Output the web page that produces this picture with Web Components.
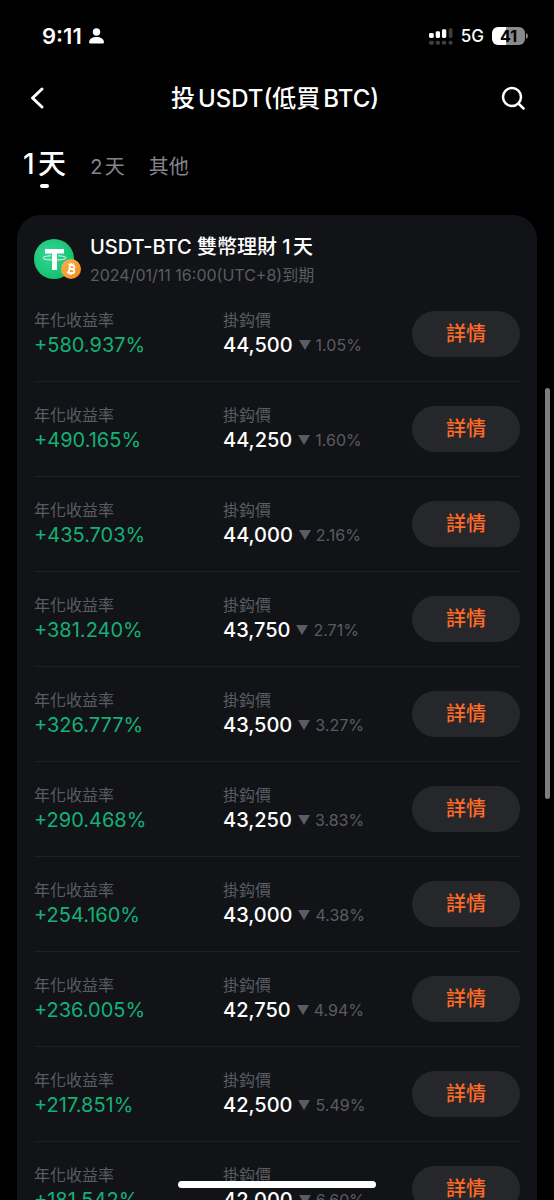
<!DOCTYPE html>
<html lang="zh-Hant">
<head>
<meta charset="utf-8">
<meta name="viewport" content="width=device-width, initial-scale=1">
<title>投USDT(低買BTC)</title>
<style>
  html, body { margin: 0; height: 100%; background: #000; }
  body {
    font-family: Inter, "Noto Sans CJK TC", sans-serif;
    color: #fff;
    text-autospace: normal;
    overflow: hidden;
  }
</style>
</head>
<body>
<dual-app>
  <status-bar slot="status" time="9:11" network="5G" battery="41"></status-bar>
  <nav-header slot="header">投USDT(低買BTC)</nav-header>
  <day-tabs slot="tabs"></day-tabs>
  <product-card>
    <product-head slot="head">
      USDT-BTC 雙幣理財 1天
      <span slot="expiry">2024/01/11 16:00(UTC+8)到期</span>
    </product-head>
    <yield-row apr="+580.937%" price="44,500" drop="1.05%"></yield-row>
    <yield-row apr="+490.165%" price="44,250" drop="1.60%"></yield-row>
    <yield-row apr="+435.703%" price="44,000" drop="2.16%"></yield-row>
    <yield-row apr="+381.240%" price="43,750" drop="2.71%"></yield-row>
    <yield-row apr="+326.777%" price="43,500" drop="3.27%"></yield-row>
    <yield-row apr="+290.468%" price="43,250" drop="3.83%"></yield-row>
    <yield-row apr="+254.160%" price="43,000" drop="4.38%"></yield-row>
    <yield-row apr="+236.005%" price="42,750" drop="4.94%"></yield-row>
    <yield-row apr="+217.851%" price="42,500" drop="5.49%"></yield-row>
    <yield-row apr="+181.542%" price="42,000" drop="6.60%"></yield-row>
  </product-card>
</dual-app>

<script>
const define = (name, render) => customElements.define(name, class extends HTMLElement {
  constructor() {
    super();
    this.attachShadow({ mode: 'open' });
  }
  connectedCallback() {
    this.shadowRoot.innerHTML = render(this);
  }
});

define('dual-app', () => `
  <style>
    :host { display: flex; flex-direction: column; height: 100vh; position: relative; }
    main { flex: 1; min-height: 0; overflow: hidden; padding: 0 17px; }
    .thumb { position: absolute; right: 4px; top: 388px; width: 5px; height: 411px; border-radius: 3px; background: #7d7d80; }
    .home { position: absolute; left: 50%; bottom: 12px; width: 198px; height: 7px; margin-left: -99px; border-radius: 4px; background: #fff; }
  </style>
  <slot name="status"></slot>
  <slot name="header"></slot>
  <slot name="tabs"></slot>
  <main><slot></slot></main>
  <div class="thumb"></div>
  <div class="home"></div>`);

define('status-bar', el => `
  <style>
    :host { display: flex; align-items: center; justify-content: space-between; height: 72px; padding: 0 26px 0 42px; }
    div { display: flex; align-items: center; }
    .time { gap: 7px; font-size: 22px; font-weight: 600; }
    .net { gap: 8px; font-size: 17px; font-weight: 500; }
    .level { box-sizing: border-box; width: 33px; height: 18px; border-radius: 6px; background: linear-gradient(90deg, #fff 42%, #8a8a8a 42%); color: #000; font-size: 16px; font-weight: 700; justify-content: center; }
    .cell { gap: 1px; }
    svg { display: block; }
  </style>
  <div class="time"><span>${el.getAttribute('time')}</span>
    <svg width="15" height="16" viewBox="0 0 15 16" fill="#fff"><circle cx="7.500" cy="4" r="3.700"/><path d="M1.200 15.500Q0 15.500 0 14C.3 11 3.300 9 7.500 9s7.200 2 7.500 5Q15 15.500 13.800 15.500Z"/></svg>
  </div>
  <div class="net">
    <svg width="24" height="18" viewBox="0 0 25 18">
      <g fill="#fff"><rect x="0" y="6" width="5" height="5" rx="1.500"/><rect x="7" y="4" width="4.500" height="7" rx="1.500"/><rect x="13.500" y="2" width="4.500" height="9" rx="1.500"/></g>
      <g fill="#3c3c3c"><rect x="20.500" y="1" width="4" height="10" rx="1.500"/><rect x="0" y="14" width="5" height="4" rx="1.500"/><rect x="7" y="14" width="4.500" height="4" rx="1.500"/><rect x="13.500" y="14" width="4.500" height="4" rx="1.500"/><rect x="20.500" y="14" width="4" height="4" rx="1.500"/></g>
    </svg>
    <span>${el.getAttribute('network')}</span>
    <div class="cell"><div class="level">${el.getAttribute('battery')}</div>
      <svg width="2" height="6" viewBox="0 0 2 6"><path d="M0 0Q2 1 2 3T0 6Z" fill="#8a8a8a"/></svg></div>
  </div>`);

define('nav-header', () => `
  <style>
    :host { display: flex; align-items: center; justify-content: space-between; height: 52px; padding: 0 29px 0 25px; }
    button { display: grid; place-items: center; width: 24px; height: 32px; padding: 0; border: 0; background: none; color: #fff; }
    h1 { margin: 0; font-size: 24px; font-weight: 500; line-height: 32px; padding-top: 2px; white-space: nowrap; }
    svg { fill: none; stroke: #fff; stroke-width: 2.500; stroke-linecap: round; stroke-linejoin: round; }
  </style>
  <button type="button" aria-label="返回"><svg width="24" height="24" viewBox="0 0 24 24"><path stroke-width="3" d="M17 3L7.500 12L17 21"/></svg></button>
  <h1><slot></slot></h1>
  <button type="button" aria-label="搜尋"><svg width="24" height="24" viewBox="0 0 24 24"><circle cx="11" cy="11" r="9"/><path d="M17.500 17.500L22.500 22.500"/></svg></button>`);

define('day-tabs', () => `
  <style>
    :host { display: block; height: 91px; }
    nav { display: flex; align-items: baseline; gap: 24px; padding: 20px 23px 0; }
    button { display: block; padding: 0; border: 0; background: none; font: 400 20px/40px Inter, "Noto Sans CJK TC", sans-serif; color: #85868d; text-autospace: normal; }
    button[aria-current] { font-size: 28px; font-weight: 500; color: #fff; }
    button[aria-current]::after { content: ""; display: block; width: 9px; height: 4px; margin: 0 auto; border-radius: 2px; background: #fff; }
  </style>
  <nav><button type="button" aria-current="true">1天</button><button type="button">2天</button><button type="button">其他</button></nav>`);

define('product-card', () => `
  <style>
    :host { display: block; padding: 0 17px; background: #121317; border-radius: 24px; }
  </style>
  <slot name="head"></slot>
  <slot></slot>`);

define('product-head', () => `
  <style>
    :host { display: flex; gap: 8px; height: 72px; }
    .coins { flex: none; width: 48px; height: 42px; margin-top: 23px; }
    .text { padding-top: 17px; white-space: nowrap; }
    h2 { margin: 0; font-size: 20px; font-weight: 500; line-height: 30px; }
    p { margin: 0; font-size: 16px; line-height: 26px; color: #5b5c63; }
  </style>
  <svg class="coins" viewBox="0 0 48 42" aria-hidden="true">
    <defs>
      <radialGradient id="g" cx=".4" cy=".4" r=".65"><stop offset="0" stop-color="#35d796"/><stop offset="1" stop-color="#12bf6c"/></radialGradient>
      <linearGradient id="o" x1="0" y1="0" x2="1" y2="1"><stop offset="0" stop-color="#fbb24a"/><stop offset="1" stop-color="#f08a1c"/></linearGradient>
    </defs>
    <circle cx="20" cy="21" r="20" fill="url(#g)"/>
    <path fill="none" stroke="#d9fbec" stroke-width="1" d="M17 17.800C12 18 9 18.900 9 19.800C9 21.300 14 22 20.500 22S32 21.300 32 19.800C32 18.900 29 18 24 17.800"/>
    <path fill="#fff" d="M11 11H30V15.500H23V32H18V15.500H11Z"/>
    <circle cx="37" cy="31" r="10" fill="url(#o)"/>
    <g transform="translate(37 31) rotate(12)" fill="none" stroke="#fff" stroke-width="1.800" stroke-linejoin="round">
      <path d="M-3.500 -4H1Q3 -4 3 -2T1 0H-1.500H1.500Q3.700 0 3.700 2T1.500 4H-3.500M-1.600 -4V4"/>
      <path stroke-width="1.300" d="M-1 -6V-4M1.200 -6V-4M-1 4V6M1.200 4V6"/>
    </g>
  </svg>
  <div class="text"><h2><slot></slot></h2><p><slot name="expiry"></slot></p></div>`);

define('yield-row', el => `
  <style>
    :host { display: grid; grid-template-columns: 1fr 1fr 108px; align-items: center; padding: 21px 0; border-bottom: 1px solid #1f2024; }
    dl { margin: 0; padding-bottom: 2px; white-space: nowrap; }
    dt { font-size: 16px; line-height: 24px; color: #5b5c63; }
    dd { display: flex; align-items: center; margin: 0; font-size: 20px; font-weight: 500; line-height: 26px; }
    .apr { color: #12b176; font-weight: 400; }
    small { font-size: 16px; font-weight: 400; color: #5b5c63; margin-left: 5px; }
    dd svg { margin-left: 6px; }
    button { height: 46px; padding: 0; border: 0; border-radius: 23px; background: #26272b; color: #ff6b26; font: 500 20px/46px Inter, "Noto Sans CJK TC", sans-serif; }
  </style>
  <dl><dt>年化收益率</dt><dd class="apr">${el.getAttribute('apr')}</dd></dl>
  <dl><dt>掛鈎價</dt><dd>${el.getAttribute('price')}<svg width="12" height="10" viewBox="0 0 12 10" aria-label="下跌"><path d="M0 0H12L6 10Z" fill="#5b5c63"/></svg><small>${el.getAttribute('drop')}</small></dd></dl>
  <button type="button">詳情</button>`);
</script>
</body>
</html>
